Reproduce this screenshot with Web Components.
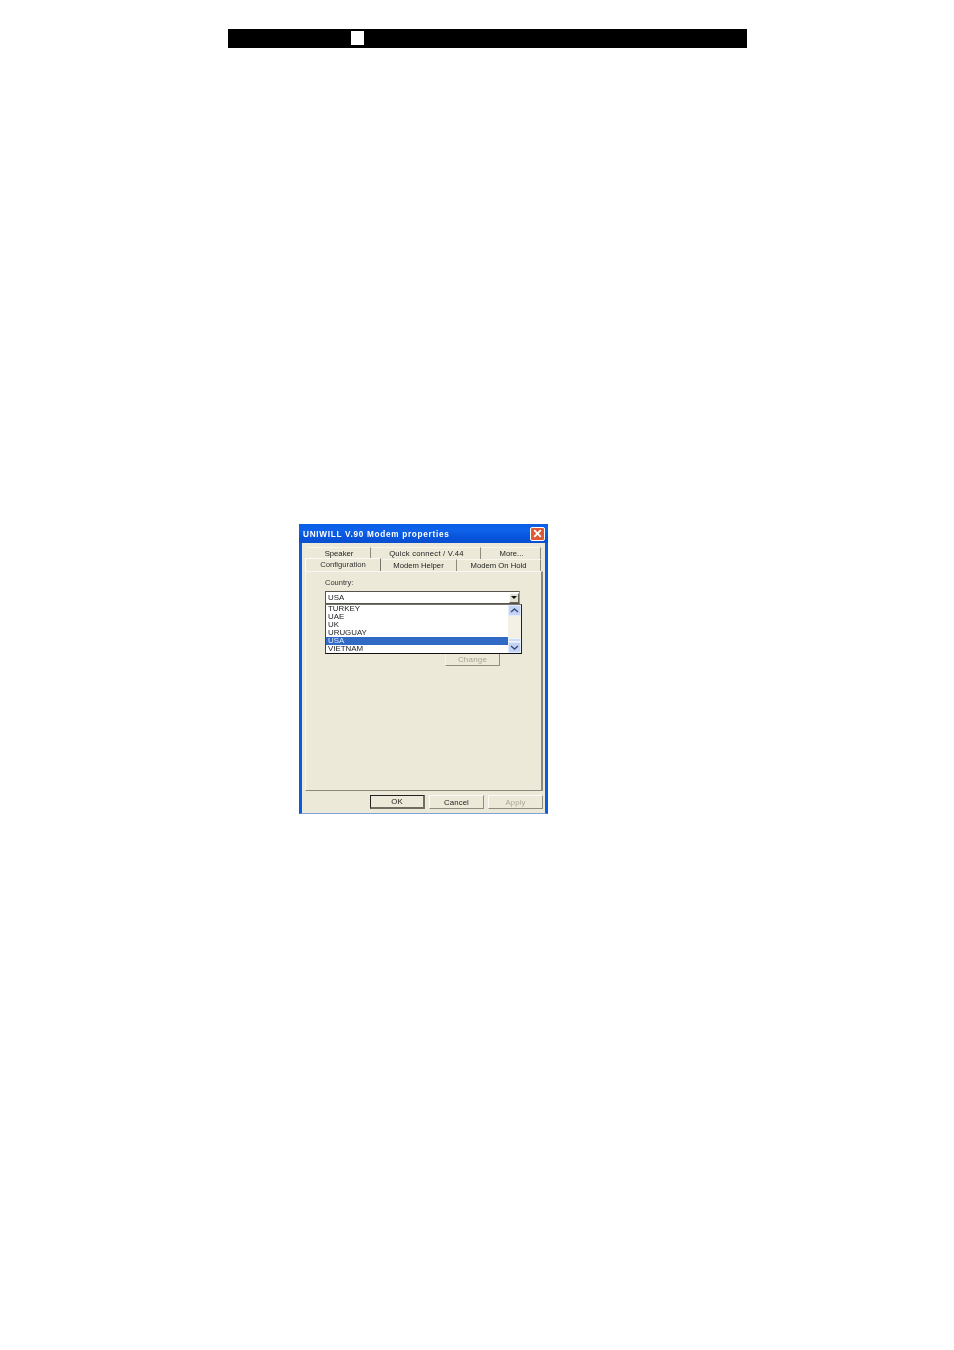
<!DOCTYPE html>
<html><head><meta charset="utf-8"><title>Modem properties</title>
<style>html,body{margin:0;padding:0;background:#fff;font-family:"Liberation Sans",Arial,sans-serif}</style>
</head><body>
<x-topbar></x-topbar>
<x-dialog heading="UNIWILL V.90 Modem properties">
  <x-tabrow slot="tabs1"><x-tab w="63">Speaker</x-tab><x-tab w="110" style="letter-spacing:.22px;padding-left:2px">Quick connect / V.44</x-tab><x-tab w="60" style="padding-left:2px">More...</x-tab></x-tabrow>
  <x-tabrow slot="tabs2"><x-tab w="76" selected>Configuration</x-tab><x-tab w="76">Modem Helper</x-tab><x-tab w="84">Modem On Hold</x-tab></x-tabrow>
  <x-combo slot="body" label="Country:" value="USA">
    <x-listitem>TURKEY</x-listitem><x-listitem>UAE</x-listitem><x-listitem>UK</x-listitem><x-listitem>URUGUAY</x-listitem><x-listitem selected>USA</x-listitem><x-listitem>VIETNAM</x-listitem>
  </x-combo>
</x-dialog>
<script>
function def(name, css, html, init){
  customElements.define(name, class extends HTMLElement{
    connectedCallback(){
      if(this.shadowRoot) return;
      const r=this.attachShadow({mode:'open'});
      r.innerHTML='<style>'+css+'</style>'+(typeof html==='function'?html(this):html);
      if(init) init(this);
    }
  });
}
def('x-topbar',`:host{display:block;box-sizing:border-box;margin:29px 0 0 228px;width:519px;height:19px;background:#000;padding:2px 0 0 123px}
 i{display:block;width:13px;height:14px;background:#fff}`,`<i></i>`);

def('x-tabrow',`:host{display:flex;height:12px}`,`<slot></slot>`);
def('x-tab',`:host{display:flex;align-items:center;justify-content:center;box-sizing:border-box;height:100%;font-size:7.7px;color:#222;border-top:1px solid #f7f5ec;border-right:1px solid #8d8b80;white-space:nowrap}
 :host([selected]){position:relative;z-index:2;height:13px;margin-top:-1px;padding:0 0 2px;color:#333;background:#ece9d8;border-top:1px solid #fbfaf4;border-right:1px solid #77756b;border-left:1px solid #fff}`,`<slot></slot>`,
 el=>{el.style.width=el.getAttribute('w')+'px'});

def('x-listitem',`:host{display:block;box-sizing:border-box;height:8px;line-height:8px;padding-left:2px;font-size:7.9px;color:#222;white-space:nowrap}
 :host([selected]){background:#316ac5;color:#dfe8f6}`,`<slot></slot>`);

const chev=(d)=>`<svg width="9" height="7" viewBox="0 0 9 7"><path d="${d}" fill="none" stroke="#3a4d78" stroke-width="1.4"/></svg>`;
def('x-combo',`:host{display:block;position:relative;height:100%}
 .lab{position:absolute;left:19px;top:7px;font-size:7.5px;line-height:8px;color:#333}
 .box{position:absolute;left:19px;top:19px;width:195px;height:13px;box-sizing:border-box;background:#fff;border:1px solid #55544d;border-right-color:#9a988c;display:flex;align-items:center;justify-content:space-between;padding-left:2px;font-size:7.9px;color:#222}
 .arrow{width:10px;height:10px;box-sizing:border-box;background:#e4e1d2;border:1px solid;border-color:#fff #66655c #66655c #fff;display:flex;align-items:center;justify-content:center}
 .arrow b{width:0;height:0;border:3px solid transparent;border-top:3px solid #111;border-bottom:0}
 .list{position:absolute;z-index:3;left:19px;top:32px;width:197px;height:50px;box-sizing:border-box;background:#fff;border:1px solid;border-color:#77756b #222 #111 #444;display:flex}
 .items{flex:1;min-width:0}
 .sb{width:13px;background:#f3f1e6;display:flex;flex-direction:column;justify-content:space-between}
 .sb .end{height:11px;background:#c3d3f6;display:flex;align-items:center;justify-content:center;border:1px solid #e4ebfb;box-sizing:border-box}
 .sb .stack{display:flex;flex-direction:column}
 .sb .thumb{height:4px;background:#cfdcf8;border:1px solid #eef2fc;box-sizing:border-box}
 .chg{position:absolute;left:139px;top:80px;width:55px;height:14px;box-sizing:border-box;border:1px solid;border-color:#f6f4ea #8f8d80 #8f8d80 #f6f4ea;background:#ece9d8;display:flex;align-items:flex-end;justify-content:center;font-size:8px;line-height:9px;letter-spacing:.2px;color:#a8a698;padding-bottom:1px}`,
 el=>`<div class="lab">${el.getAttribute('label')}</div>
 <div class="box"><span>${el.getAttribute('value')}</span><span class="arrow"><b></b></span></div>
 <div class="chg">Change</div>
 <div class="list"><div class="items"><slot></slot></div><div class="sb"><div class="end">${chev('M1 5 L4.5 2 L8 5')}</div><div class="stack"><div class="thumb"></div><div class="end">${chev('M1 2 L4.5 5 L8 2')}</div></div></div></div>`);

def('x-btn',`:host{display:flex;align-items:center;justify-content:center;box-sizing:border-box;width:55px;height:14px;font-size:7.8px;letter-spacing:.1px;color:#222;background:#ece9d8;border:1px solid;border-color:#fbfaf4 #8f8d80 #8f8d80 #fbfaf4}
 :host([primary]){border:1px solid #222;border-right:2px solid #6f6d62;border-bottom:2px solid #6f6d62}
 :host([disabled]){color:#aaa89a}`,`<slot></slot>`);

def('x-dialog',`:host{display:flex;flex-direction:column;box-sizing:border-box;margin:476px 0 0 299px;width:249px;height:290px;background:#ece9d8;position:relative;border-left:3px solid #0a5be0;border-right:3px solid #0a5be0;border-bottom:1px solid #7ea0d8;filter:blur(.3px)}
 .title{margin:0 -3px;height:19px;flex:none;background:linear-gradient(#0a5ee6,#0f63ea 30%,#0654dc 70%,#0a4fd0);color:#fff;font-weight:bold;font-size:8.2px;letter-spacing:.72px;display:flex;align-items:center;justify-content:space-between;padding:0 3px 0 4px;box-sizing:border-box;white-space:nowrap}
 .h{margin-top:2px}
 .x{width:15px;height:14px;box-sizing:border-box;border:1px solid #fff;border-radius:2px;background:#dd5a35;display:flex;align-items:center;justify-content:center}
 .tabs{margin:4px 0 0 6px;flex:none}
 .panel{flex:none;margin:0 0 0 3px;width:238px;height:220px;box-sizing:border-box;border:1px solid;border-color:#f8f7ef #8a887c #8a887c #f8f7ef;border-right-width:2px;background:#ece9d8}
 .t2{margin-left:-3px}
 .foot{flex:none;display:flex;gap:4px;justify-content:flex-end;margin:4px 2px 0 0}`,
 el=>`<div class="title"><span class="h">${el.getAttribute('heading')}</span><span class="x"><svg width="9" height="9" viewBox="0 0 9 9"><path d="M1.2 1.2 L7.8 7.8 M7.8 1.2 L1.2 7.8" stroke="#fff" stroke-width="1.8"/></svg></span></div>
 <div class="tabs"><slot name="tabs1"></slot><div class="t2"><slot name="tabs2"></slot></div></div>
 <div class="panel"><slot name="body"></slot></div>
 <div class="foot"><x-btn primary>OK</x-btn><x-btn>Cancel</x-btn><x-btn disabled>Apply</x-btn></div>`);
</script>
</body></html>
